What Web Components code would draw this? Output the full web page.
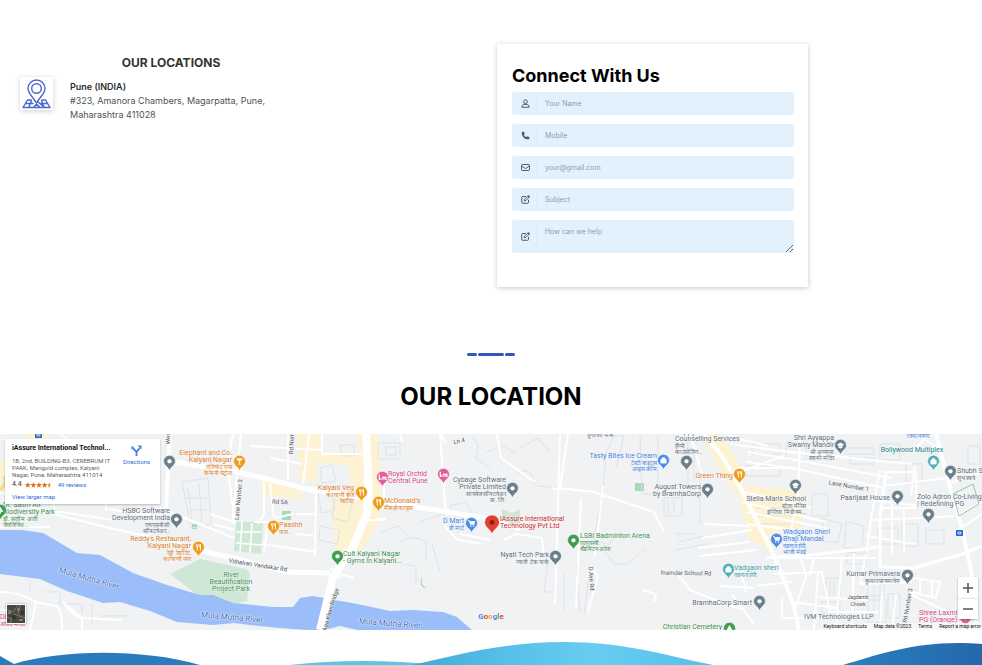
<!DOCTYPE html>
<html lang="en">
<head>
<meta charset="utf-8">
<title>Contact – Our Location</title>
<style>
  body { margin: 0; background: #fff; color: #111; font-family: Inter, "Liberation Sans", sans-serif; overflow-x: hidden; }
</style>
</head>
<body>
<contact-page></contact-page>
<script>
const define = (name, html, setup) => {
  const template = document.createElement('template');
  template.innerHTML = html;
  customElements.define(name, class extends HTMLElement {
    constructor() {
      super();
      this.attachShadow({ mode: 'open' }).append(template.content.cloneNode(true));
    }
    connectedCallback() { if (setup) setup(this, this.shadowRoot); }
  });
};

define('office-address', `
<style>
  :host { display: block; }
  h2 { margin: 0 0 6px; font-size: 12px; line-height: 16px; font-weight: 700; text-align: center; color: #333; }
  .row { display: flex; gap: 17px; }
  .icon { flex: none; width: 33px; height: 33px; background: #fff; box-shadow: 0 1px 5px rgba(0,0,0,.2); display: grid; place-items: center; }
  svg { width: 29px; height: 30px; }
  address { font-style: normal; font-size: 9px; line-height: 14px; color: #4c5359; padding-top: 3px; }
  strong { display: block; font-size: 9px; color: #2b2f33; font-weight: 600; }
</style>
<h2>OUR LOCATIONS</h2>
<div class="row">
  <div class="icon">
    <svg viewBox="0 0 29 30" fill="none" stroke="#4a67cf" stroke-width="1.4" stroke-linejoin="round" stroke-linecap="round">
      <path d="M14.500 24C11 18 6 14.500 6 9.500a8.500 8.500 0 0 1 17 0c0 5-5 8.500-8.500 14.500Z"/>
      <circle cx="14.500" cy="9.500" r="4.800"/>
      <path d="M9 21H5.500L1 28.500h27L23.500 21H20M4 24.500h7M18 24.500h7.500M9.500 21.500 7 28M19.500 21.500l2.500 6.500M12 28l2.500-3 3 3M16 23l6 5"/>
    </svg>
  </div>
  <address><strong><slot name="city"></slot></strong><slot></slot></address>
</div>`);

define('form-field', `
<style>
  :host { display: block; }
  .field { display: flex; background: #e3f1fd; border-radius: 3px; overflow: hidden; }
  label { flex: none; width: 25px; display: grid; place-items: center; padding-left: 2px; box-sizing: border-box; border-right: 1px solid #dcebf8; color: #50565c; }
  svg { width: 9px; height: 9px; display: block; }
  input, textarea { flex: 1; min-width: 0; box-sizing: border-box; border: 0; outline: 0; margin: 0; background: none; font: 7px/11px Inter, "Liberation Sans", sans-serif; padding: 0 8px; height: 23px; color: #333; }
  textarea { height: 33px; padding-top: 6px; resize: vertical; display: block; }
  ::placeholder { color: #8f9eab; opacity: 1; }
</style>
<div class="field"><label for="control"></label></div>`, (el, root) => {
  const icons = {
    user: '<g fill="none" stroke="currentColor" stroke-width="1.300"><circle cx="6" cy="3.600" r="2.500"/><path d="M1.200 11c0-2.500 1.500-3.700 3-3.700h3.600c1.500 0 3 1.200 3 3.700z"/></g>',
    phone: '<path fill="currentColor" d="M1 1.500 3.600.7l1.500 3-1.400 1.400c.7 1.500 1.800 2.600 3.300 3.300l1.400-1.500 3 1.400-.7 2.800C5 11.600.7 7 1 1.500z"/>',
    mail: '<g fill="none" stroke="currentColor" stroke-width="1.300" stroke-linejoin="round"><rect x=".7" y="2" width="10.600" height="8" rx="1"/><path d="m.9 4 5.100 3.500L11.100 4"/></g>',
    edit: '<g fill="none" stroke="currentColor" stroke-width="1.300" stroke-linejoin="round"><path d="M6.500 2H2a1 1 0 0 0-1 1v7a1 1 0 0 0 1 1h7a1 1 0 0 0 1-1V6.500"/><path d="M4.300 7.800 4.700 5.700 9.300 1.100l1.700 1.700-4.600 4.600z"/></g><path fill="currentColor" d="m8.500 1.500 1-1q.5-.3 1 0l1 1q.4.5 0 1l-1 1z"/>'
  };
  root.querySelector('label').innerHTML = '<svg viewBox="0 0 12 12" aria-hidden="true">' + icons[el.getAttribute('icon')] + '</svg>';
  const kind = el.getAttribute('type');
  const control = document.createElement(kind === 'area' ? 'textarea' : 'input');
  if (kind !== 'area') control.type = kind;
  control.id = 'control';
  control.placeholder = el.getAttribute('hint');
  control.setAttribute('aria-label', el.getAttribute('hint'));
  root.querySelector('.field').append(control);
});

define('connect-form', `
<style>
  :host { display: block; background: #fff; box-shadow: 0 1px 5px rgba(0,0,0,.22); padding: 20px 14px 34px 15px; box-sizing: border-box; }
  h2 { margin: 0 0 5px; font-size: 18px; line-height: 23px; font-weight: 700; color: #000; }
  form { display: grid; gap: 9px; }
</style>
<h2>Connect With Us</h2>
<form>
  <form-field icon="user" type="text" hint="Your Name"></form-field>
  <form-field icon="phone" type="tel" hint="Mobile"></form-field>
  <form-field icon="mail" type="email" hint="your@gmail.com"></form-field>
  <form-field icon="edit" type="text" hint="Subject"></form-field>
  <form-field icon="edit" type="area" hint="How can we help"></form-field>
</form>`);

define('section-title', `
<style>
  :host { display: block; text-align: center; }
  .rule { display: flex; justify-content: center; gap: 1px; }
  i { width: 10px; height: 3px; border-radius: 2px; background: #3158b4; }
  i:nth-child(2) { width: 26px; }
  h2 { margin: 25px 0 22px; font-size: 24px; line-height: 31px; font-weight: 700; color: #000; }
</style>
<div class="rule"><i></i><i></i><i></i></div>
<h2><slot></slot></h2>`);

define('map-pin', `
<style>
  :host { position: absolute; left: var(--x); top: var(--y); width: 13px; height: 16px; margin: -7px 0 0 -6px; color: #6b7f8b; }
  :host([big]) { width: 16px; height: 21px; margin: -8px 0 0 -8px; }
  svg { width: 100%; height: 100%; display: block; }
</style>
<svg viewBox="0 0 12 15"><path fill="currentColor" stroke="#fff" stroke-width=".5" d="M6 .3a5.600 5.600 0 0 1 5.600 5.600c0 3.600-4 4.800-5.600 8.700C4.400 10.700.4 9.500.4 5.900A5.600 5.600 0 0 1 6 .3z"/><g></g></svg>`, (el, root) => {
  const glyphs = {
    dot: '<circle cx="6" cy="5.900" r="2" fill="#fff"/>',
    food: '<path d="M4.300 3v2.500M5.500 3v2.500M4.900 5v4M7.800 3v6M7.300 3v3" stroke="#fff" stroke-width=".9"/>',
    cup: '<path d="M3.300 3.500h5.400L6 6.300zM6 6v2.500M4.500 8.600h3" fill="#fff" stroke="#fff" stroke-width=".7"/>',
    bed: '<path d="M3 3.500v5M3 7.500h6.200V6H5.500M9.200 7v1.500" fill="none" stroke="#fff" stroke-width="1.100"/>',
    bag: '<path d="M3.500 5h5v3.500h-5zM4.800 5V3.500h2.400V5" fill="#fff" stroke="#fff" stroke-width=".7"/>',
    cart: '<path d="M2.800 3.400h1.200l1 3.500h3.400l.6-2.600H4.500" fill="#fff" stroke="#fff" stroke-width=".8"/><circle cx="5.300" cy="8.400" r=".7" fill="#fff"/><circle cx="8" cy="8.400" r=".7" fill="#fff"/>',
    school: '<path d="m2.500 5.300 3.500-2 3.500 2-3.500 2zM4 6.800v1.200l2 1 2-1V6.800" fill="#fff"/>',
    tree: '<path d="m6 2.800 2.700 4.700H3.300zM5.500 7h1v2h-1z" fill="#fff"/>',
    target: '<circle cx="6" cy="5.900" r="1.800" fill="#8e1c16"/>'
  };
  root.querySelector('g').innerHTML = glyphs[el.getAttribute('kind')];
});

define('map-label', `
<style>
  :host { position: absolute; left: var(--x); top: var(--y); white-space: nowrap; font: 7px/7px Roboto, sans-serif; margin-top: -4px; color: #56656f;
    text-shadow: 0 0 1px #fff, 0 0 1px #fff, 0 0 2px #fff; }
  :host([anchor="right"]) { transform: translateX(-100%); text-align: right; }
  :host([anchor="center"]) { transform: translateX(-50%); text-align: center; }
  :host([turn]) { transform: translate(-50%) rotate(var(--turn)); }
  .local { font-size: 6px; line-height: 6px; }
</style>
<slot></slot><div class="local"><slot name="local"></slot></div>`);

define('place-card', `
<style>
  :host { display: flex; justify-content: space-between; box-sizing: border-box; width: 155px; padding: 5px 10px 4px 7px; background: #fff; box-shadow: 0 1px 2px rgba(0,0,0,.25); font: 6px/7px Roboto, sans-serif; color: #5b5f63; }
  h3 { margin: 0 0 4px; font-size: 7px; line-height: 9px; font-weight: 700; color: #111; white-space: nowrap; }
  p { margin: 0; white-space: nowrap; }
  a { color: #2a6bd4; text-decoration: none; }
  .rate { display: flex; align-items: center; gap: 3px; margin: 3px 0 5px; }
  .rate b { font-size: 7px; font-weight: 400; color: #333; }
  .rate svg { width: 28px; height: 6px; margin-right: 2px; }
  .go { display: grid; justify-items: center; align-content: start; padding-top: 1px; gap: 2px; }
  .go svg { width: 11px; height: 11px; }
</style>
<div>
  <h3>iAssure International Technol...</h3>
  <p>1B, 2nd, BUILDING-B3, CEREBRUM IT<br>PARK, Marigold complex, Kalyani<br>Nagar, Pune, Maharashtra 411014</p>
  <div class="rate"><b>4.4</b>
    <svg viewBox="0 0 50 10" fill="#e7711b"><path id="s" d="m5 0 1.500 3.400 3.500.3-2.600 2.500.7 3.600L5 7.900 1.900 9.800l.7-3.600L0 3.700l3.500-.3z"/><use href="#s" x="10"/><use href="#s" x="20"/><use href="#s" x="30"/><path d="M45 0v7.900l-3.100 1.900.7-3.600L40 3.700l3.500-.3z"/></svg>
    <a href="#reviews">49 reviews</a></div>
  <a href="#map">View larger map</a>
</div>
<a class="go" href="#directions">
  <svg viewBox="0 0 12 12" fill="none" stroke="#4684dc" stroke-width="2"><path d="M6 12V7.500L1.500 3M6 7.500 9.500 3.500"/><path d="M7 .5h4.500V5z" fill="#4684dc" stroke="none"/><path d="M.5 1.500h3l-3 3z" fill="#4684dc" stroke="none"/></svg>
  Directions</a>`);

define('location-map', `
<style>
  :host { display: block; position: relative; height: 196px; overflow: hidden; background: #f0f2f4; font-family: Roboto, sans-serif; }
  .land { display: block; width: 100%; height: 100%; }
  place-card { position: absolute; left: 5px; top: 5px; }
  .sat { position: absolute; left: 6px; bottom: 6px; width: 20px; height: 20px; padding: 0; border: 1px solid #fff; background: #46483f; box-shadow: 0 0 2px rgba(0,0,0,.4); }
  .sat svg { display: block; width: 100%; height: 100%; }
  .zoom { position: absolute; right: 4px; bottom: 11px; width: 20px; background: #fff; box-shadow: 0 1px 2px rgba(0,0,0,.3); display: grid; }
  .zoom button { border: 0; padding: 0; background: none; height: 21px; display: grid; place-items: center; color: #555; }
  .zoom button + button { border-top: 1px solid #e6e6e6; }
  .zoom svg { width: 10px; height: 10px; }
  .legal { position: absolute; right: 0; bottom: 0; display: flex; gap: 7px; padding: 0 1px 0 2px; background: rgba(247,248,249,.8); font-size: 5px; line-height: 7px; color: #111; white-space: nowrap; }
  .legal button { border: 0; padding: 0; background: none; font: inherit; color: inherit; }
  .legal a { color: inherit; text-decoration: none; }
  .google { position: absolute; left: 50%; bottom: 8px; transform: translateX(-50%); font: 700 8px/10px Roboto, sans-serif; color: #4285f4; text-shadow: 0 0 2px #fff; text-decoration: none; }
  .r { color: #ea4335; } .y { color: #e9a800; } .g { color: #34a853; }
</style>
<svg class="land" viewBox="0 0 982 196" preserveAspectRatio="xMidYMid slice" fill="none" stroke-linejoin="round" aria-hidden="true">
  <g fill="#fdf3d3">
    <path d="M296 0h24l-4 48-16-2zM306 0h14v18h38V0h20l4 45-2 40-18 32h-26l-6-52 22-6-4-28-42-4zM262 44l40 8v14l-40-6zM700 0l20 0 22 34-2 30-14-18zM738 50l64 8 0 36-48 8zM28 0l22 0-40 34-10 14V28z"/>
    <path d="M738 56l10 48 24 14 6-18-22-40z"/>
  </g>
  <g fill="#cfe8d5">
    <path d="M170 140l30-15 46 10 4 4-3 28-14 3-20-8-14 0z"/>
    <path d="M236 88h27l-2 32-27-3z"/>
    <path d="M502 75l10 4 8-4v14h-18z"/>
  </g>
  <g fill="#a8dab5"><path d="M282 77h9v9h-9zM635 49h9v8h-9zM192 90h5v5h-5zM423 143q-4 8 4 11-8 0-6-9z"/></g>
  <g stroke="#fff" stroke-width="1.500">
    <path d="M242 88l-2 30M252 89l-2 30M236 98h26M236 109l26 2"/>
  </g>
  <g stroke="#dfe3e7" stroke-width="1">
    <path d="M182 48l26-4 3 46-20 4zM188 54l4 32M199 50l3 38M186 64h22M187 76h22M320 34l12-3 4 16-14 2zM340 12l14-2v12h-12zM378 9h22v16h-22zM386 13h10v8h-10zM318 58l14-2 3 20-14 3zM334 66l18 2-4 20-16-4zM320 92l20 4-3 14-18-4zM400 108q16-8 26 0v18M381 98l18-6 12 12M450 72l16-4 8 16-14 10zM420 88l22-8 14 10M402 130l14 2v18M432 110l8 28"/>
    <path d="M520 14l18-10 12 14M516 40q16-10 18 10M538 52l24 2M604 24l10-22h10l-8 32M640 2l2 58h16V2M648 30h10M664 64h18v18h-18zM668 66v14M674 66v14M620 96l-16 20 10 14h14l18-16M676 100h20M678 108l26-6M676 116l30-6M548 128l-4 30h12M564 140v36M602 60l-8 46 12 4M606 18l-4 50M472 4q10 6 4 20l14 10M486 18l18-6 12 8"/>
    <path d="M752 10h28v10h-28zM786 8h20v18h-20zM746 32h34v10h-34zM846 14h28v6h-28zM880 10h20v16h-20zM850 24h24v6h-24zM906 30h16v18h-16zM812 60h16v22h-16zM822 84l20 6-4 18h-14zM846 88l18 4-2 22h-18zM878 94h20v16h-20zM902 90h16v22h-16zM826 144h14v20h-14zM822 168h18v12h-18zM868 148h16v14h-16zM868 166h18v22h-18zM888 160h12v24h-12zM848 118l18 2v10h-20zM926 96h18v14h-18zM968 12h12v18h-12zM44 158h16v12M60 170h22v10M92 170v20M100 182h30M30 146v10"/>
    <path d="M874 150v34M880 150v34M894 162v20M756 66h38M756 74h36M758 82h34M760 90h30M830 146v16M834 146v16M688 2v50M694 8v40M700 30v60M576 130l4 48M590 135l-6 45"/>
  </g>
  <g stroke="#fff" stroke-width="2">
    <path d="M160 74l74 30M60 0l44 34M0 58l34 16 80 12M106 5v70l60 8M54 70v10l60 15 56 12 26 8M0 93l50 0M210 80l24 8M214 90l20 6M233 0l-6 30 8 60M241 0l-9 90"/>
    <path d="M288 0l0 46M309 0l-6 50M250 12l72 4M322 0v20h40M270 24l32 6M300 52l16 8-1 62M264 48l0 32-6 10M270 50l4 34M275 84l18-4M254 88h14l-4 30M262 110l54 8M296 80h20M296 100l20 2M384 42l0 24M400 0l2 8M440 0l6 82M446 10l-5-10M376 85h10M368 86l14 0M444 92l14 14 24 4M460 100l30 6M497 0l4 24 34 24"/>
    <path d="M560 0l-5 170M568 0l-8 54 34 4 60 20 10 20M552 54l10 2M581 64l-5 110M590 132l8 10-10 36M603 52l-8 70M504 106l12-6 26 4 2 18M642 156l14 4-2 8M674 136l16 20 30 12 24 8M690 0l12 40M702 104l50-8M698 114l52-6M700 122l56-6M704 90l46 2M740 38l44-16M748 18l48 8 96 18M746 28l46 6 92 20M738 34h50M730 10l60 8 122 12M728 2l40 10M742 68l84 20M746 78l80 16M748 90l60 8M744 58l68 16"/>
    <path d="M800 2l-2 60-8 40M880 36l-9 48-4 34M886 38h30l1 36h-34M872 66l48 6M870 86l50-2 34-2M866 102l50 8M892 70v50M904 76v44M915 32l-4 30M930 0l-18 18M884 52l62-8M922 4l20 12M948 50l34-12M952 100l30-20M958 82l24-14M766 124h110M774 140l48-2 8 40M800 122l6 20-12 36M814 124l-4 18M818 140l-4 56M842 122l-6 74M854 120l-2 76M866 120l-6 30 52-2M868 166l-50-3M828 178h50M792 168l46 6M756 152l36-4M720 152l34 2M732 160l22 30M742 142l4 16M906 140l8 4 26 4-4 16-26-6M920 146v14M932 148v14M910 160l42 20M896 160l-4 36M882 158l-2 38M782 164v20h46"/>
    <path d="M0 158q20 0 36 10l20 4q6 2 6 24M62 168l20 16 40 2M82 184v12M36 168l-6 28M0 176h18M66 172q10 12 16 12M340 140l14 4M330 134l10 10"/>
  </g>
  <g stroke="#fff" stroke-width="4">
    <path d="M168 27l70 11 65 16 54 9 60 10 73 12 30 10" stroke-width="5"/>
    <path d="M198 116l44 10 45 12 43 1" stroke-width="5"/>
    <path d="M704 0l18 22 18 31 18 36 15 30 20 50 6 27" stroke-width="4"/>
    <path d="M770 123l40-2 70-8v20l34 1 48-14 20-8M880 113v-30l6-46" stroke-width="3"/>
    <path d="M936 0l14 53 13 46 9 42 4 55" stroke-width="4"/>
    <path d="M170 0l-4 74"/>
  </g>
  <path fill="#9bbefb" d="M0 96h22l21 3 34 20 23 2 33 18 34 12 33 10h13l20 8 40 4h20l7-9 13-2 27 5 7 1 20 4 23 5 23-1 30 2 14 5 16 14H362l-22-5-20 5-40-3-30-3-16-2-21 2-36-3-27-11-30-9-17 1-36-12-27-12-40-5z"/>
  <path stroke="#fff" stroke-width="8" d="M366 0l3 56-2 23-14 34-20 30-13 53"/>
  <g stroke="#8fc99d" stroke-width="1"><path d="M953 60l20-10 6 20-20 12z"/></g>
  <path stroke="#fbdf86" stroke-width="4" d="M0 56q8-6 4-14"/>
  <g><rect x="35" y="-3" width="7" height="7" rx="1" fill="#1a66d2"/><rect x="956" y="96" width="7" height="6" rx="1" fill="#1a66d2"/><path d="M958 98h3v2h-3zM37 0h3v2h-3z" stroke="#fff" stroke-width=".8"/></g>
</svg>
<div id="places"></div>
<place-card></place-card>
<button class="sat" aria-label="Satellite view"><svg viewBox="0 0 18 18" fill="none"><path d="M0 4l6 3 5-7M3 18l4-9 11 4M11 9l2-9M0 12l5 2" stroke="#7a7c6e"/><path d="M1 6h3v3H1zM10 3h3v3h-3zM12 14h4v2h-4z" fill="#8d7463"/><path d="M5 10h4v4H5zM14 6h3v3h-3z" fill="#2c3a2c"/></svg></button>
<a class="google" href="#google">G<span class="r">o</span><span class="y">o</span>g<span class="g">l</span><span class="r">e</span></a>
<div class="zoom">
  <button aria-label="Zoom in"><svg viewBox="0 0 10 10"><path d="M5 0v10M0 5h10" stroke="currentColor" stroke-width="1.500"/></svg></button>
  <button aria-label="Zoom out"><svg viewBox="0 0 10 10"><path d="M0 5h10" stroke="currentColor" stroke-width="1.500"/></svg></button>
</div>
<div class="legal"><button>Keyboard shortcuts</button><span>Map data ©2023</span><a href="#terms">Terms</a><a href="#report">Report a map error</a></div>`, (el, root) => {
  const grey = '#5c6b75', pinGrey = '#6c808c', orange = '#d97a1e', green = '#3a8a4c', blue = '#3d7de0', teal = '#3b98a6', pink = '#d6407c', red = '#c5221f', dark = '#4a4f55', water = '#3468b8';
  // x, y, anchor, colour, name, local name, rotation, size
  const labels = [
    [232,20,'right',orange,'Elephant and Co.|Kalyani Nagar','एलिफंट एन्ड|केफेनी पेट्रोल'],
    [170,78,'right',grey,'HSBC Software|Development India','एचएसबीसी|सॉफ्टवेअर…'],
    [191,106,'right',orange,"Reddy's Restaurant,|Kalyani Nagar",'रेड्डी रेस्टोरेंट,|कल्याणी नगर'],
    [3,72,'left',green,'Dr. Salim Ali|Biodiversity Park','डॉ. सलीम अली|जैवविविध…'],
    [231,142,'center',green,'River|Beautification|Project Park'],
    [279,92,'left',orange,'Paashh','पाश..'],
    [354,55,'right',orange,'Kalyani Veg','कल्याणी व्हेज|रेस्टॉरंट'],
    [384,68,'left',orange,"McDonald's",'मॅकडोनाल्ड्स'],
    [388,41,'left',pink,'Royal Orchid|Central Pune'],
    [506,47,'right',grey,'Cybage Software|Private Limited','सायबेज सॉफ्टवेअर|प्रा. लि.'],
    [464,88,'right',blue,'D Mart','डी मार्ट'],
    [500,86,'left',red,'iAssure International|Technology Pvt Ltd'],
    [580,103,'left',green,'LSBI Badminton Arena','एलएसबी|बॅडमिंटन अरेना'],
    [549,122,'right',grey,'Nyati Tech Park','न्याती टेक पार्क'],
    [343,121,'left',green,'Cult Kalyani Nagar|- Gyms in Kalyani...'],
    [657,23,'right',blue,'Tasty Bites Ice Cream','टेस्टी बाइट्स|आइस क्रीम'],
    [675,-1,'left',grey,'Happy Pill|Counselling Services','हॅप्पी|काउंसेलिंग…'],
    [701,54,'right',grey,'August Towers|by BramhaCorp'],
    [733,43,'right',orange,'Green Thing'],
    [806,66,'right',grey,'Stella Maris School','स्टेला मॅरिस|इंग्लिश मिडीयम…'],
    [834,5,'right',grey,'Shri Ayyappa|Swamy Mandir','श्री अय्यप्पा|स्वामी मंदिर'],
    [912,17,'center','#14808a','Bollywood Multiplex'],
    [957,38,'left',grey,'Shubh S','शुभ स्क्वे'],
    [890,65,'right',grey,'Paarijaat House'],
    [917,64,'left',grey,'Zolo Adron Co-Living|| Redefining PG'],
    [783,99,'left',blue,'Wadgaon Sheri|Bhaji Mandai','वडगाव शेरी|भाजी मंडई'],
    [734,135,'left',teal,'Vadgaon sheri','वडगाव शेरी'],
    [900,141,'right',grey,'Kumar Primavera','कुमार प्रायमावेरा'],
    [858,164,'center',dark,'Jagdamb|Chowk','',0,5],
    [752,170,'right',grey,'BramhaCorp Smart'],
    [804,184,'left',grey,'IVM Technologies LLP'],
    [919,180,'left',pink,'Shree Laxmi|PG (Orange)'],
    [722,194,'right',green,'Christian Cemetery'],
    [587,2,'left',grey,'','दुर्गेश्वरी पार्क'],
    [907,3,'left',blue,'','विमाननगर'],
    [0,184,'left',pink,'DL','आरती मंदिर'],
    [686,139,'turn',dark,'Inamdar School Rd','',1,6],
    [167,4,'turn',dark,'West','',-90,6],
    [291,10,'turn',dark,'Rd Num','',-88,6],
    [280,68,'turn',dark,'Rd 5A','',2,6],
    [238,66,'turn',dark,'Lane Number 3','',-85,6],
    [258,131,'turn',dark,'Vithalrao Vandekar Rd','',9,6],
    [330,176,'turn',dark,'Aga Khan Bridge','',-73,6],
    [89,145,'turn',water,'Mula Mutha River','',16,8],
    [232,184,'turn',water,'Mula Mutha River','',5,8],
    [390,190,'turn',water,'Mula Mutha River','',4,8],
    [459,7,'turn',dark,'Ln 4','',-12,6],
    [849,52,'turn',dark,'Lane Number 1','',10,6],
    [592,145,'turn',dark,'D Ave Rd','',86,6],
    [907,172,'turn',dark,'Rd Number 3','',-80,6]
  ];
  const pins = [
    [169,28,pinGrey,'dot'],[239,28,'#f09a1a','cup'],[176,86,pinGrey,'dot'],[198,114,'#f09a1a','food'],[273,93,'#f09a1a','food'],
    [361,59,'#f09a1a','food'],[378,69,'#f09a1a','food'],[382,44,'#e0609a','bed'],[443,41,'#e0609a','bed'],[512,55,pinGrey,'dot'],
    [471,90,'#4a8bf0','cart'],[573,107,'#3f9e52','dot'],[555,123,pinGrey,'dot'],[337,123,'#3f9e52','dot'],[663,27,'#4a8bf0','bag'],
    [686,28,pinGrey,'dot'],[707,56,pinGrey,'dot'],[739,41,'#f09a1a','food'],[795,52,pinGrey,'school'],[840,12,pinGrey,'school'],
    [933,28,'#4fb0be','bag'],[950,38,pinGrey,'dot'],[897,63,pinGrey,'dot'],[928,81,pinGrey,'dot'],[776,106,'#4a8bf0','cart'],
    [728,136,'#4fb0be','bag'],[907,142,pinGrey,'dot'],[759,168,pinGrey,'dot'],[729,195,'#3f9e52','tree'],[965,184,'#e0609a','dot'],[0,77,'#3f9e52','tree'],
    [492,88,'#e0402f','target','big']
  ];
  const places = root.getElementById('places');
  for (const [x, y, anchor, color, name, local, turn, size] of labels) {
    const label = document.createElement('map-label');
    label.setAttribute(anchor === 'turn' ? 'turn' : 'anchor', anchor);
    label.style.cssText = `--x:${x}px;--y:${y}px;--turn:${turn || 0}deg;color:${color}` + (size ? `;font-size:${size}px` : '');
    for (const line of name.replace('||', '|\u0001').split('|')) {
      const row = document.createElement('div');
      row.textContent = line.replace('\u0001', '| ').replace('  ', ' ');
      if (line) label.append(row);
    }
    for (const line of (local || '').split('|')) {
      if (!line) continue;
      const row = document.createElement('div');
      row.slot = 'local';
      row.lang = 'mr';
      row.textContent = line;
      label.append(row);
    }
    places.append(label);
  }
  for (const [x, y, color, kind, big] of pins) {
    const pin = document.createElement('map-pin');
    pin.style.cssText = `--x:${x}px;--y:${y}px;color:${color}`;
    pin.setAttribute('kind', kind);
    if (big) pin.setAttribute('big', '');
    places.append(pin);
  }
});

define('footer-wave', `
<style>
  :host { display: block; height: 35px; overflow: hidden; }
  svg { display: block; width: 100%; height: 100%; }
</style>
<svg viewBox="0 0 982 35" preserveAspectRatio="none" aria-hidden="true">
  <defs>
    <linearGradient id="sky"><stop offset="0" stop-color="#3fa9d6"/><stop offset=".3" stop-color="#56bfe8"/><stop offset=".6" stop-color="#68cdf0"/><stop offset="1" stop-color="#55c0ea"/></linearGradient>
    <linearGradient id="sea"><stop offset="0" stop-color="#2a7fc0"/><stop offset="1" stop-color="#2568ab"/></linearGradient>
  </defs>
  <path fill="#5cc4e6" d="M290 35q70-8 150 0z"/>
  <path fill="url(#sky)" d="M412 35C450 27 500 12 563 12s100 13 150 23z"/>
  <path fill="#2a7bbd" d="M0 26l14 8C60 20 140 18 200 35H0z"/>
  <path fill="url(#sea)" d="M843 35c40-12 80-26 139-21v21z"/>
</svg>`);

define('contact-page', `
<style>
  :host { display: block; }
  .contact { display: grid; grid-template-columns: 1fr 1fr; align-items: start; padding: 44px 0 66px; }
  office-address { margin: 11px 20px 0; max-width: 302px; }
  connect-form { margin: 0 174px 0 6px; }
</style>
<main>
  <section class="contact">
    <office-address><span slot="city">Pune (INDIA)</span>#323, Amanora Chambers, Magarpatta, Pune,<br>Maharashtra 411028</office-address>
    <connect-form></connect-form>
  </section>
  <section>
    <section-title>OUR LOCATION</section-title>
    <location-map></location-map>
  </section>
</main>
<footer-wave></footer-wave>`);
</script>
</body>
</html>
